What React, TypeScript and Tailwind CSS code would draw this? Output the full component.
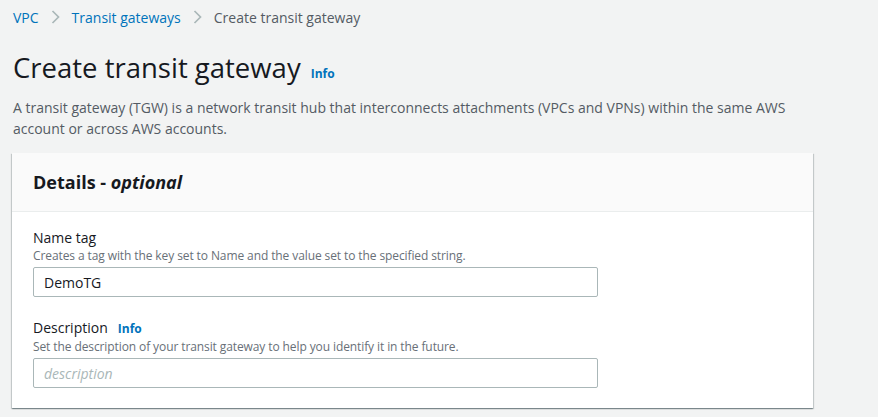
function Chevron() {
  return (
    <svg width="9" height="14" viewBox="0 0 9 14" className="mx-[12px] shrink-0" fill="none">
      <polyline points="1.5,1 7.5,7 1.5,13" stroke="#aab7b8" strokeWidth="1.7" />
    </svg>
  );
}

function Crumbs() {
  return (
    <nav className="flex items-center h-[34px] px-[13px] text-[14px]">
      <a className="text-[#0073bb]">VPC</a>
      <Chevron />
      <a className="text-[#0073bb]">Transit gateways</a>
      <Chevron />
      <span className="text-[#545b64]">Create transit gateway</span>
    </nav>
  );
}

function Field({
  label,
  hint,
  info,
  value,
  placeholder,
}: {
  label: string;
  hint: string;
  info?: boolean;
  value?: string;
  placeholder?: string;
}) {
  return (
    <div className="flex flex-col">
      <div className="flex items-baseline gap-[10px] text-[14px] leading-[20px] text-[#16191f]">
        {label}
        {info && <span className="text-[12px] font-bold text-[#0073bb]">Info</span>}
      </div>
      <div className="text-[12px] leading-[16px] tracking-[-0.1px] text-[#687078] mb-[3px]">{hint}</div>
      <div className="w-[565px] h-[30px] rounded-[2px] border border-[#aab7b8] bg-white flex items-center px-[10px] text-[14px]">
        {value ? (
          <span className="text-[#16191f]">{value}</span>
        ) : (
          <span className="italic text-[#aab7b8]">{placeholder}</span>
        )}
      </div>
    </div>
  );
}

export default function App() {
  return (
    <div
      className="min-h-[417px] bg-[#f2f3f3] text-[#16191f]"
      style={{ fontFamily: '"Open Sans", "Noto Sans", sans-serif' }}
    >
      <Crumbs />
      <div className="px-[13px] pt-[16px]">
        <div className="flex items-baseline gap-[10px]">
          <h1 className="text-[27.5px] leading-[36px] font-normal text-[#16191f]">Create transit gateway</h1>
          <span className="text-[12px] font-bold text-[#0073bb]">Info</span>
        </div>
        <p className="mt-[11px] text-[14px] leading-[21px] text-[#545b64] max-w-[800px]">
          A transit gateway (TGW) is a network transit hub that interconnects attachments (VPCs and VPNs) within the same AWS account or across AWS accounts.
        </p>
      </div>
      <div className="ml-[12px] mt-[14px] w-[801px] bg-white shadow-[0_1px_1px_0_rgba(0,28,36,0.3),1px_1px_1px_0_rgba(0,28,36,0.15),-1px_1px_1px_0_rgba(0,28,36,0.15)]">
        <div className="h-[59px] bg-[#fafafa] border-b border-[#eaeded] flex items-center px-[21px]">
          <h2 className="text-[18px] font-bold text-[#16191f]">
            Details - <i>optional</i>
          </h2>
        </div>
        <div className="px-[21px] pt-[16px] pb-[20px] flex flex-col gap-[21px]">
          <Field
            label="Name tag"
            hint="Creates a tag with the key set to Name and the value set to the specified string."
            value="DemoTG"
          />
          <Field
            label="Description"
            info
            hint="Set the description of your transit gateway to help you identify it in the future."
            placeholder="description"
          />
        </div>
      </div>
    </div>
  );
}
